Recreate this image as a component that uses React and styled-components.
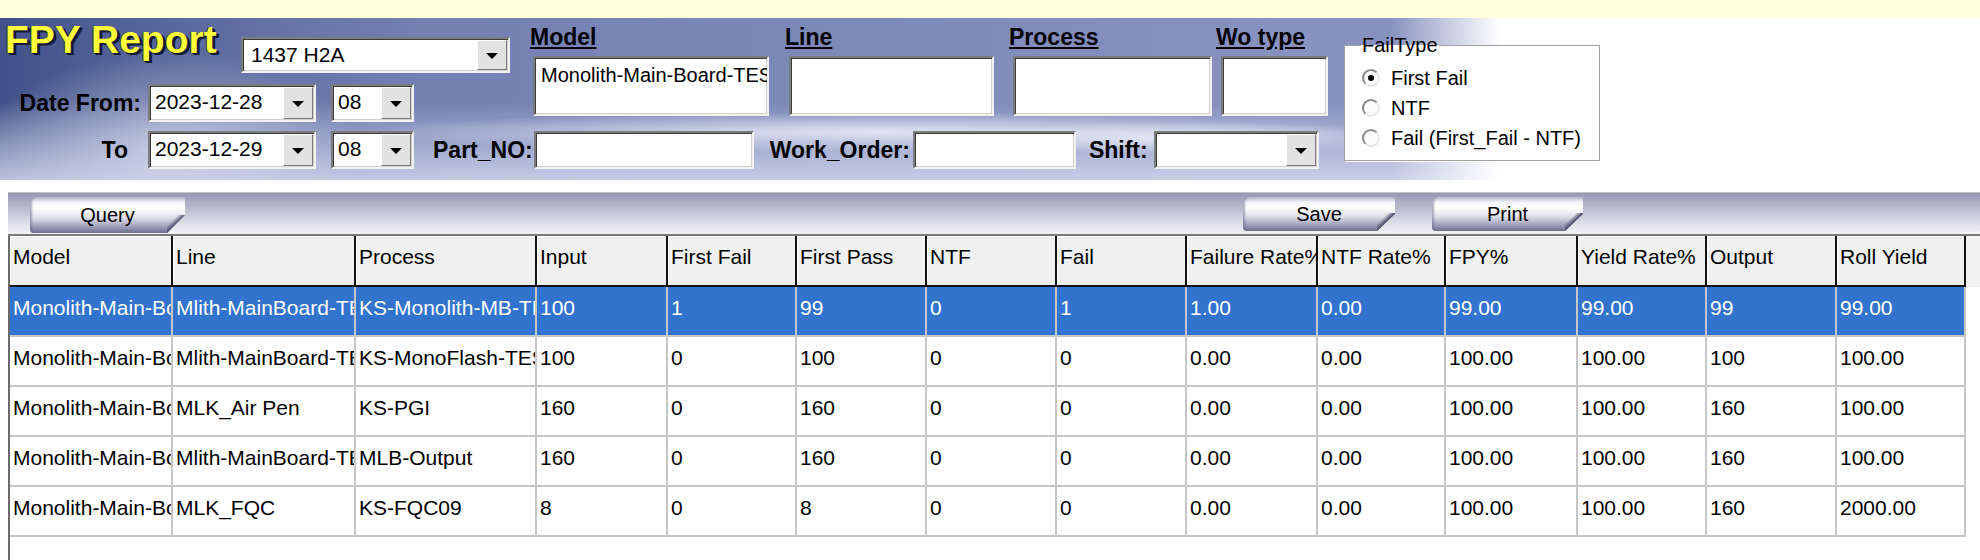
import React from "react";
import styled, { createGlobalStyle } from "styled-components";

const columns = [
  { title: "Model", w: 163 },
  { title: "Line", w: 183 },
  { title: "Process", w: 181 },
  { title: "Input", w: 131 },
  { title: "First Fail", w: 129 },
  { title: "First Pass", w: 130 },
  { title: "NTF", w: 130 },
  { title: "Fail", w: 130 },
  { title: "Failure Rate%", w: 131 },
  { title: "NTF Rate%", w: 128 },
  { title: "FPY%", w: 132 },
  { title: "Yield Rate%", w: 129 },
  { title: "Output", w: 130 },
  { title: "Roll Yield", w: 129 },
];

const rows = [
  ["Monolith-Main-Board-TEST", "Mlith-MainBoard-TEST", "KS-Monolith-MB-TEST", "100", "1", "99", "0", "1", "1.00", "0.00", "99.00", "99.00", "99", "99.00"],
  ["Monolith-Main-Board-TEST", "Mlith-MainBoard-TEST", "KS-MonoFlash-TEST", "100", "0", "100", "0", "0", "0.00", "0.00", "100.00", "100.00", "100", "100.00"],
  ["Monolith-Main-Board-TEST", "MLK_Air Pen", "KS-PGI", "160", "0", "160", "0", "0", "0.00", "0.00", "100.00", "100.00", "160", "100.00"],
  ["Monolith-Main-Board-TEST", "Mlith-MainBoard-TEST", "MLB-Output", "160", "0", "160", "0", "0", "0.00", "0.00", "100.00", "100.00", "160", "100.00"],
  ["Monolith-Main-Board-TEST", "MLK_FQC", "KS-FQC09", "8", "0", "8", "0", "0", "0.00", "0.00", "100.00", "100.00", "160", "2000.00"],
];

const filterFields = [
  { label: "Model", col: 255, inset: 3, w: 236, value: "Monolith-Main-Board-TEST" },
  { label: "Line", col: 224, inset: 4, w: 205, value: "" },
  { label: "Process", col: 207, inset: 4, w: 199, value: "" },
  { label: "Wo type", col: 112, inset: 5, w: 107, value: "" },
];

const failTypes = ["First Fail", "NTF", "Fail (First_Fail - NTF)"];

function Combo({ value, w, h = 38, pad = 5 }) {
  return (
    <ComboBox $w={w} $h={h}>
      <ComboText $pad={pad}>{value}</ComboText>
      <DropButton>
        <Arrow />
      </DropButton>
    </ComboBox>
  );
}

function App() {
  return (
    <Page>
      <GlobalStyle />
      <TopStrip />
      <Banner>
        <FormArea>
          <UpperArea>
            <LeftStack>
              <TitleRow>
                <Title>FPY Report</Title>
                <ModelPick>
                  <Combo value="1437 H2A" w={269} h={36} pad={8} />
                </ModelPick>
              </TitleRow>
              <DateRow>
                <FormLabel $w={141}>Date From:</FormLabel>
                <Gap $w={7} />
                <Combo value="2023-12-28" w={168} />
                <Gap $w={15} />
                <Combo value="08" w={83} />
              </DateRow>
            </LeftStack>
            <FieldGrid>
              {filterFields.map((f) => (
                <FieldCol key={f.label} $w={f.col}>
                  <FieldLabel>{f.label}</FieldLabel>
                  <TextArea $inset={f.inset} $w={f.w}>
                    {f.value}
                  </TextArea>
                </FieldCol>
              ))}
            </FieldGrid>
          </UpperArea>
          <LowerArea>
            <FormLabel $w={141} $padRight={13}>
              To
            </FormLabel>
            <Gap $w={7} />
            <Combo value="2023-12-29" w={168} />
            <Gap $w={15} />
            <Combo value="08" w={83} />
            <Gap $w={19} />
            <FormLabel>Part_NO:</FormLabel>
            <Gap $w={1} />
            <TextInput $w={220} />
            <Gap $w={16} />
            <FormLabel>Work_Order:</FormLabel>
            <Gap $w={3} />
            <TextInput $w={163} />
            <Gap $w={13} />
            <FormLabel>Shift:</FormLabel>
            <Gap $w={6} />
            <Combo value="" w={165} />
          </LowerArea>
        </FormArea>
        <FailTypeBox>
          <legend>FailType</legend>
          {failTypes.map((t, i) => (
            <RadioRow key={t}>
              <Radio $checked={i === 0} />
              <span>{t}</span>
            </RadioRow>
          ))}
        </FailTypeBox>
      </Banner>

      <Main>
        <Toolbar>
          <ToolButton $w={155}>Query</ToolButton>
          <ActionGroup>
            <ToolButton $w={152} $h={34}>
              Save
            </ToolButton>
            <ToolButton $w={151} $h={34}>
              Print
            </ToolButton>
          </ActionGroup>
        </Toolbar>

        <GridWrap>
          <Grid>
            <colgroup>
              {columns.map((c) => (
                <col key={c.title} style={{ width: c.w }} />
              ))}
            </colgroup>
            <thead>
              <tr>
                {columns.map((c) => (
                  <HeadCell key={c.title}>
                    <CellText>{c.title}</CellText>
                  </HeadCell>
                ))}
              </tr>
            </thead>
            <tbody>
              {rows.map((r, i) => (
                <Row key={i} $selected={i === 0}>
                  {r.map((v, j) => (
                    <Cell key={j}>
                      <CellText>{v}</CellText>
                    </Cell>
                  ))}
                </Row>
              ))}
            </tbody>
          </Grid>
        </GridWrap>
      </Main>
    </Page>
  );
}

export default App;

const GlobalStyle = createGlobalStyle`
  html, body {
    margin: 0;
    padding: 0;
    background: #ffffff;
  }
  body {
    font-family: "Liberation Sans", Arial, sans-serif;
    color: #000;
    overflow: hidden;
  }
`;

const Page = styled.div`
  width: 1980px;
  height: 560px;
  overflow: hidden;
  background: #fff;
`;

const TopStrip = styled.div`
  height: 18px;
  background: #ffffdc;
`;

const Banner = styled.header`
  display: flex;
  align-items: flex-start;
  height: 162px;
  background:
    linear-gradient(to right, rgba(255, 255, 255, 0) 1390px, #ffffff 1500px),
    radial-gradient(ellipse 520px 20px at 880px 114px, rgba(236, 239, 250, 0.85), rgba(236, 239, 250, 0) 100%),
    radial-gradient(ellipse 230px 16px at 1180px 120px, rgba(236, 239, 250, 0.8), rgba(236, 239, 250, 0) 100%),
    radial-gradient(ellipse 190px 100px at 170px 135px, rgba(214, 218, 238, 0.75), rgba(214, 218, 238, 0) 100%),
    linear-gradient(to bottom, rgba(255, 255, 255, 0) 0, rgba(255, 255, 255, 0) 52%, rgba(216, 220, 240, 0.8) 100%),
    linear-gradient(to right, #42528a 0px, #5a699e 180px, #7480b2 420px, #7c88b8 800px, #8892c0 1300px);
`;

const FormArea = styled.div`
  display: flex;
  flex-direction: column;
  width: 1328px;
`;

const UpperArea = styled.div`
  display: flex;
  align-items: flex-start;
  height: 113px;
`;

const LeftStack = styled.div`
  display: flex;
  flex-direction: column;
  width: 510px;
`;

const TitleRow = styled.div`
  display: flex;
  align-items: flex-start;
  height: 65px;
`;

const Title = styled.h1`
  margin: 0 0 0 5px;
  width: 236px;
  font: bold 39px/44px "Liberation Sans", Arial, sans-serif;
  color: #ffff3a;
  text-shadow: 1px 1px 0 #141a34, 2px 2px 0 #141a34, 3px 2px 0 #141a34, -1px 0 0 #2a3050;
  white-space: nowrap;
`;

const ModelPick = styled.div`
  margin-top: 19px;
`;

const DateRow = styled.div`
  display: flex;
  align-items: center;
  height: 39px;
`;

const LowerArea = styled.div`
  display: flex;
  align-items: center;
  height: 38px;
`;

const Gap = styled.div`
  flex: none;
  width: ${(p) => p.$w}px;
`;

const FormLabel = styled.label`
  flex: none;
  box-sizing: border-box;
  ${(p) => (p.$w ? `width: ${p.$w}px; text-align: right;` : "")}
  padding-right: ${(p) => p.$padRight || 0}px;
  font: bold 23px/26px "Liberation Sans", Arial, sans-serif;
  color: #000;
  white-space: nowrap;
`;

const ComboBox = styled.div`
  flex: none;
  display: flex;
  box-sizing: border-box;
  width: ${(p) => p.$w}px;
  height: ${(p) => p.$h}px;
  background: #fff;
  border: 2px solid;
  border-color: #7c7c7c #f2f2f2 #f2f2f2 #7c7c7c;
  box-shadow: inset 1px 1px 0 #3c3c3c, inset -1px -1px 0 #d4d0c8;
`;

const ComboText = styled.div`
  flex: 1;
  min-width: 0;
  padding-left: ${(p) => p.$pad}px;
  font: 21px/32px "Liberation Sans", Arial, sans-serif;
  white-space: nowrap;
  overflow: hidden;
`;

const DropButton = styled.div`
  flex: none;
  display: flex;
  align-items: center;
  justify-content: center;
  width: 30px;
  margin: 1px 1px 1px 0;
  box-sizing: border-box;
  background: #e2e2e2;
  border: 1px solid;
  border-color: #ffffff #7c7c7c #7c7c7c #ffffff;
`;

const Arrow = styled.span`
  width: 0;
  height: 0;
  border-left: 6px solid transparent;
  border-right: 6px solid transparent;
  border-top: 6px solid #000;
  margin-top: 2px;
`;

const FieldGrid = styled.div`
  display: flex;
  margin: 6px 0 0 20px;
`;

const FieldCol = styled.div`
  display: flex;
  flex-direction: column;
  width: ${(p) => p.$w}px;
`;

const FieldLabel = styled.span`
  font: bold 23px/26px "Liberation Sans", Arial, sans-serif;
  text-decoration: underline;
  text-underline-offset: 2px;
  white-space: nowrap;
`;

const sunken = `
  box-sizing: border-box;
  background: #fff;
  border: 2px solid;
  border-color: #7c7c7c #f2f2f2 #f2f2f2 #7c7c7c;
  box-shadow: inset 1px 1px 0 #3c3c3c, inset -1px -1px 0 #d4d0c8;
`;

const TextArea = styled.div`
  ${sunken}
  margin: 6px 0 0 ${(p) => p.$inset}px;
  width: ${(p) => p.$w}px;
  height: 60px;
  padding: 5px 0 0 6px;
  font: 20px/24px "Liberation Sans", Arial, sans-serif;
  white-space: nowrap;
  overflow: hidden;
`;

const TextInput = styled.div`
  ${sunken}
  flex: none;
  width: ${(p) => p.$w}px;
  height: 38px;
`;

const FailTypeBox = styled.fieldset`
  box-sizing: border-box;
  width: 256px;
  margin: 16px 0 0 16px;
  padding: 6px 12px 7px 17px;
  border: 1px solid #a0a0a0;
  box-shadow: 1px 1px 0 #ffffff;
  background: #ffffff;
  font: 20px/23px "Liberation Sans", Arial, sans-serif;

  legend {
    padding: 0 1px;
    margin-left: -1px;
  }
`;

const RadioRow = styled.div`
  display: flex;
  align-items: center;
  gap: 11px;
  height: 30px;
  white-space: nowrap;
`;

const Radio = styled.span`
  position: relative;
  flex: none;
  box-sizing: border-box;
  width: 18px;
  height: 18px;
  border-radius: 50%;
  border: 2px solid;
  border-color: #8a8a8a #e6e6e6 #e6e6e6 #8a8a8a;
  background: #fbfbfb;

  &::after {
    content: "";
    display: ${(p) => (p.$checked ? "block" : "none")};
    position: absolute;
    left: 4px;
    top: 4px;
    width: 6px;
    height: 6px;
    border-radius: 50%;
    background: #000;
  }
`;

const Main = styled.main`
  margin: 12px 0 0 8px;
`;

const Toolbar = styled.div`
  display: flex;
  align-items: flex-start;
  box-sizing: border-box;
  height: 44px;
  padding: 4px 0 0 22px;
  border-top: 1px solid #c4c4cc;
  border-bottom: 2px solid #7a7a7a;
  background: linear-gradient(to bottom, #9898b4 0%, #bdbdd0 40%, #e4e4ee 80%, #f2f2f6 100%);
`;

const ActionGroup = styled.div`
  display: flex;
  gap: 37px;
  margin-left: 1058px;
`;

const ToolButton = styled.button`
  position: relative;
  flex: none;
  width: ${(p) => p.$w}px;
  height: ${(p) => p.$h || 36}px;
  padding: 0;
  border: none;
  border-radius: 5px 3px 0 4px;
  background: linear-gradient(
    to bottom,
    #b4b4cc 0%,
    #f6f6fb 16%,
    #ffffff 32%,
    #dedeea 58%,
    #9a9ab6 84%,
    #6e6e8e 100%
  );
  box-shadow: inset 3px 0 2px -1px rgba(110, 110, 140, 0.55);
  clip-path: polygon(0 0, 100% 0, 100% 50%, calc(100% - 18px) 100%, 0 100%);
  font: 20px/24px "Liberation Sans", Arial, sans-serif;
  color: #000;

  &::after {
    content: "";
    position: absolute;
    right: 0;
    bottom: 0;
    width: 18px;
    height: 18px;
    background: linear-gradient(to bottom right, rgba(0, 0, 0, 0) 30%, #4e4e6c 50%);
  }
`;

const GridWrap = styled.div`
  height: 324px;
  overflow: hidden;
  border-left: 2px solid #6a6a6a;
  background: linear-gradient(to bottom, #f2f2f2 0, #f2f2f2 51px, #ffffff 51px);
`;

const Grid = styled.table`
  table-layout: fixed;
  border-collapse: separate;
  border-spacing: 0;
  width: 1956px;
  font: 21px/24px "Liberation Sans", Arial, sans-serif;
`;

const HeadCell = styled.th`
  box-sizing: border-box;
  height: 51px;
  padding: 9px 0 0 3px;
  vertical-align: top;
  text-align: left;
  font-weight: normal;
  background: #f0f0f0;
  border-right: 2px solid #111;
  border-bottom: 2px solid #111;
  box-shadow: inset 1px 1px 0 #ffffff;
`;

const Row = styled.tr`
  background: ${(p) => (p.$selected ? "#3173cd" : "#ffffff")};
  color: ${(p) => (p.$selected ? "#ffffff" : "#000000")};
`;

const Cell = styled.td`
  box-sizing: border-box;
  height: 50px;
  padding: 9px 0 0 3px;
  vertical-align: top;
  border-right: 2px solid #c6c6c6;
  border-bottom: 2px solid #c6c6c6;
`;

const CellText = styled.div`
  white-space: nowrap;
  overflow: hidden;
`;
